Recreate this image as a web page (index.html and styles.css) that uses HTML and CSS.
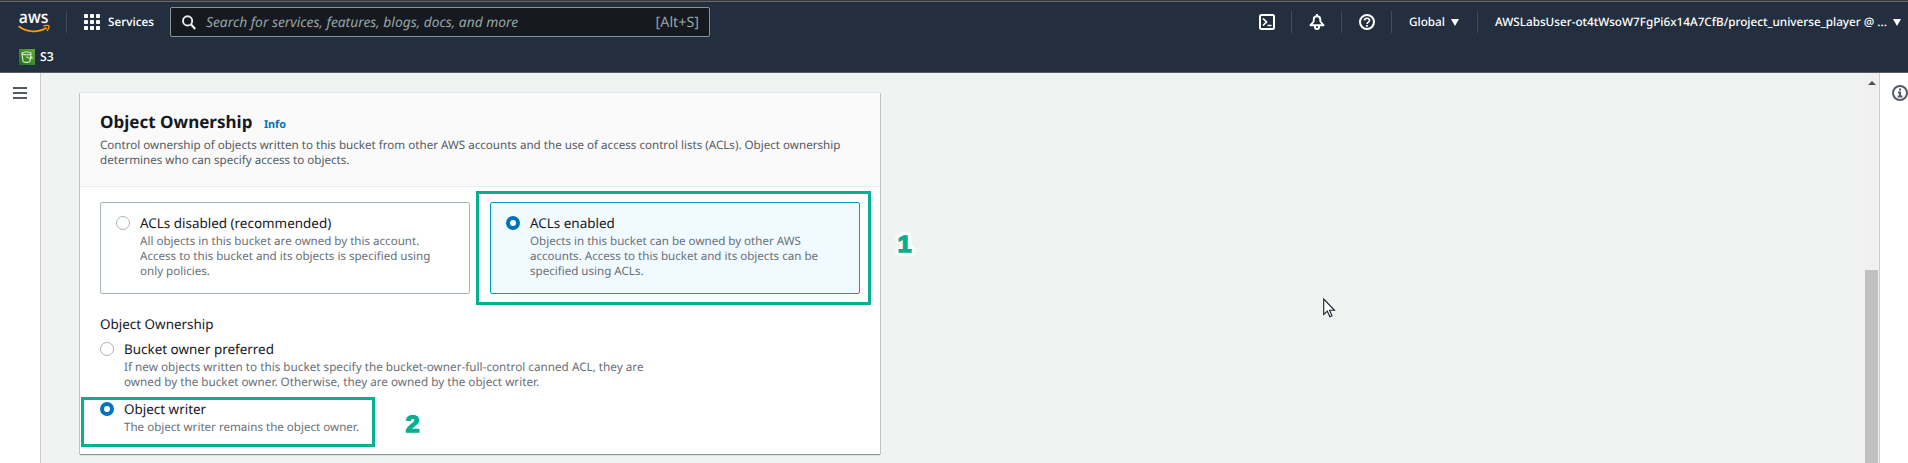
FILE: index.html
```
<!DOCTYPE html>
<html lang="en">
<head>
<meta charset="utf-8">
<title>Create S3 bucket</title>
<link rel="stylesheet" href="styles.css">
</head>
<body>
<header class="nav">
  <div class="nav-row">
    <svg class="logo" width="32" height="20" viewBox="0 0 32 20">
      <text class="logo-text" x="0.8" y="10" textLength="29.5" lengthAdjust="spacingAndGlyphs">aws</text>
      <path d="M.6 13.2c8.6 6.500 19.800 6.600 28 1.500" fill="none" stroke="#f90" stroke-width="1.800"/>
      <path d="M25.300 13.100c2-1 5.200-1 5.600-.4.400.8-.4 3.600-2 5" fill="none" stroke="#f90" stroke-width="1.300"/>
    </svg>
    <span class="divider after-logo"></span>
    <svg class="grid-icon" width="16" height="16" viewBox="0 0 16 16" fill="#fff">
      <rect width="4" height="4" rx=".8"/><rect x="6" width="4" height="4" rx=".8"/><rect x="12" width="4" height="4" rx=".8"/>
      <rect y="6" width="4" height="4" rx=".8"/><rect x="6" y="6" width="4" height="4" rx=".8"/><rect x="12" y="6" width="4" height="4" rx=".8"/>
      <rect y="12" width="4" height="4" rx=".8"/><rect x="6" y="12" width="4" height="4" rx=".8"/><rect x="12" y="12" width="4" height="4" rx=".8"/>
    </svg>
    <span class="services">Services</span>
    <div class="search">
      <svg width="14" height="15" viewBox="0 0 14 15" fill="none" stroke="#eaeded" stroke-width="1.900"><circle cx="5.600" cy="5.900" r="4.600"/><path d="M8.900 9.300l4.300 4.600" stroke-width="2.200"/></svg>
      <span class="placeholder">Search for services, features, blogs, docs, and more</span>
      <span class="shortcut">[Alt+S]</span>
    </div>
    <div class="nav-tools">
      <svg class="tool" width="16" height="16" viewBox="0 0 16 16" fill="none" stroke="#fff" stroke-width="2"><rect x="1" y="1" width="14" height="14" rx="1.500"/><path d="M4 4.500L7.500 8 4 11.500M8.500 11.500h4" stroke-width="1.700"/></svg>
      <span class="divider"></span>
      <svg class="tool" width="16" height="16" viewBox="0 0 16 16" fill="none" stroke="#fff" stroke-width="1.900" stroke-linejoin="round"><path d="M1.500 11.200h13L11.300 7.500V5.600C11.300 3.500 9.800 2.200 8 2.200S4.700 3.500 4.700 5.600v1.900z"/><path d="M8 0v2"/><path d="M5.900 12v.9a2.100 2.100 0 0 0 4.200 0V12"/></svg>
      <span class="divider"></span>
      <svg class="tool" width="16" height="16" viewBox="0 0 16 16" fill="none" stroke="#fff" stroke-width="2"><circle cx="8" cy="8" r="7"/><path d="M5.500 6.600C5.500 5 6.500 4.200 8 4.200s2.500.9 2.500 2.200C10.500 8.200 8 8 8 10" stroke-width="1.600"/><path d="M8 11v1.800" stroke-width="1.800"/></svg>
      <span class="divider"></span>
      <span class="region">Global</span>
      <svg class="caret" width="8" height="7" viewBox="0 0 8 7"><path d="M0 0h8L4 7z" fill="#fff"/></svg>
      <span class="divider"></span>
      <span class="account">AWSLabsUser-ot4tWsoW7FgPi6x14A7CfB/project_universe_player @ ...</span>
      <svg class="caret" width="8" height="7" viewBox="0 0 8 7"><path d="M0 0h8L4 7z" fill="#fff"/></svg>
    </div>
  </div>
  <div class="favorites">
    <svg width="16" height="16" viewBox="0 0 16 16"><defs><linearGradient id="s3" x1="0" y1="1" x2="1" y2="0"><stop stop-color="#1f6c1b"/><stop offset="1" stop-color="#62ab36"/></linearGradient></defs><rect width="16" height="16" fill="url(#s3)"/><g fill="none" stroke="#d9ecd2" stroke-width="1.100"><ellipse cx="7.500" cy="4.400" rx="4.500" ry="1.400"/><path d="M3 4.600l1 7.700c1.500 1.400 5.500 1.400 7 0L12 4.600M7.200 7.600c2 1.500 5.800 2.300 6 1.200.1-.5-.9-1.200-1.600-1.500"/></g></svg>
    <span class="fav-name">S3</span>
  </div>
</header>
<div class="page">
  <aside class="side">
    <span class="menu"></span>
  </aside>
  <main class="content">
    <section class="card">
      <div class="card-head">
        <h2>Object Ownership <a class="info">Info</a></h2>
        <p class="hint intro">Control ownership of objects written to this bucket from other AWS accounts and the use of access control lists (ACLs). Object ownership<br>determines who can specify access to objects.</p>
      </div>
      <div class="card-body">
        <div class="tiles">
          <div class="tile">
            <span class="radio"></span>
            <div>
              <div class="option">ACLs disabled (recommended)</div>
              <p class="hint">All objects in this bucket are owned by this account.<br>Access to this bucket and its objects is specified using<br>only policies.</p>
            </div>
          </div>
          <div class="tile selected">
            <span class="radio on"></span>
            <div>
              <div class="option">ACLs enabled</div>
              <p class="hint">Objects in this bucket can be owned by other AWS<br>accounts. Access to this bucket and its objects can be<br>specified using ACLs.</p>
            </div>
            <span class="callout callout-one"></span>
            <span class="number number-one">1</span>
          </div>
        </div>
        <div class="option group-label">Object Ownership</div>
        <div class="choice">
          <span class="radio"></span>
          <div>
            <div class="option">Bucket owner preferred</div>
            <p class="hint wide">If new objects written to this bucket specify the bucket-owner-full-control canned ACL, they are<br>owned by the bucket owner. Otherwise, they are owned by the object writer.</p>
          </div>
        </div>
        <div class="choice writer">
          <span class="radio on"></span>
          <div>
            <div class="option">Object writer</div>
            <p class="hint">The object writer remains the object owner.</p>
          </div>
          <span class="callout callout-two"></span>
          <span class="number number-two">2</span>
        </div>
      </div>
    </section>
  </main>
  <div class="scrollbar"><span class="up"></span><span class="thumb"></span></div>
  <aside class="help">
    <svg width="16" height="16" viewBox="0 0 16 16" fill="none" stroke="#545b64" stroke-width="2"><circle cx="8" cy="8" r="7"/><path d="M8 3.500v2M6 7.500h2v4M5.700 11.500h4.800"/></svg>
  </aside>
</div>
<svg class="cursor" width="13" height="20" viewBox="0 0 13 20"><path d="M.7 1v15.500l3.600-3.300 2.600 5.600 2.100-1-2.500-5.500h5z" fill="#fff" stroke="#1b2130" stroke-width="1.100"/></svg>
</body>
</html>
```
FILE: styles.css
```
* { box-sizing: border-box; }
body {
  margin: 0;
  height: 463px;
  overflow: hidden;
  display: flex;
  flex-direction: column;
  font-family: "Noto Sans", "Open Sans", sans-serif;
  color: #16191f;
  background: #f1f3f3;
  text-rendering: geometricPrecision;
  white-space: nowrap;
}
h2, p { margin: 0; }
svg { display: block; flex: none; }

.nav {
  height: 73px;
  flex: none;
  background: #232f3e;
  color: #fff;
  border-bottom: 1px solid #545b64;
  box-shadow: inset 0 1px #38393d, inset 0 2px #66676a;
}
.nav-row { display: flex; align-items: center; height: 44px; padding-left: 18px; }
.logo { overflow: visible; margin-top: 2px; }
.logo-text { font: 600 17px "Open Sans", sans-serif; fill: #fff; }
.divider { width: 1px; height: 22px; background: #414d5c; flex: none; }
.after-logo { margin: 0 17px 0 16px; }
.services { width: 62px; flex: none; margin-left: 8px; font: 600 11.7px/16px "Open Sans", sans-serif; }
.search {
  width: 540px;
  flex: none;
  height: 30px;
  display: flex;
  align-items: center;
  padding: 0 10px 0 11px;
  background: #16191f;
  border: 1px solid #879596;
  border-radius: 2px;
  color: #95a5a6;
}
.placeholder { margin-left: 10px; font-size: 13.81px; font-style: italic; }
.shortcut { margin-left: auto; font-size: 14.3px; }
.nav-tools { display: flex; flex: none; align-items: center; margin-left: 549px; font-size: 11.73px; font-weight: 500; }
.nav-tools .divider { margin-right: 17px; }
.tool { margin-right: 16px; }
.region { width: 42px; }
.account { width: 398px; }
.caret { margin-right: 18px; }
.favorites { display: flex; align-items: center; gap: 5px; height: 26px; padding-left: 19px; }
.fav-name { font: 600 12.3px/16px "Open Sans", sans-serif; }

.page { display: flex; flex: 1; min-height: 0; }
.side { width: 41px; flex: none; background: #fff; border-right: 1px solid #ccc; padding: 14px 0 0 13px; }
.menu { display: block; width: 14px; height: 12px; border: solid #545b64; border-width: 2px 0; background: linear-gradient(#545b64, #545b64) 0 3px / 14px 2px no-repeat; }
.content { flex: 1; padding: 20px 0 0 39px; }
.card {
  width: 800px;
  height: 361px;
  background: #fff;
  box-shadow: 0 1px 1px #879596, -1px 0 #c9cece, 1px 0 #c9cece, 0 -1px #e2e8e8;
}
.card-head { height: 94px; padding: 18px 20px 0; background: #fafafa; border-bottom: 1px solid #eaeded; }
h2 { font-size: 17.04px; line-height: 22px; font-weight: 700; margin-bottom: 2px; }
.info { margin-left: 7px; font-size: 10.8px; color: #0073bb; }
.hint { font-size: 11.58px; line-height: 15px; color: #687078; margin-top: 2px; }
.intro { font-size: 11.61px; color: #545b64; margin-top: 0; }
.wide { font-size: 11.72px; }
.card-body { padding: 15px 20px 0; }
.tiles { display: grid; grid-template-columns: 370px 370px; gap: 20px; }
.tile {
  position: relative;
  height: 92px;
  display: flex;
  gap: 10px;
  padding: 11px 15px;
  border: 1px solid #aab7b8;
  border-radius: 2px;
}
.selected { border-color: #00a1c9; background: #f1faff; }
.option { font-size: 13.45px; line-height: 18px; }
.radio { width: 14px; height: 14px; margin-top: 2px; flex: none; border: 1px solid #aab7b8; border-radius: 50%; background: #fff; }
.on { border: 4px solid #0073bb; }
.group-label { margin: 21px 0 7px; }
.choice { position: relative; display: flex; gap: 10px; }
.writer { margin-top: 10px; }

.callout { position: absolute; border: 3px solid #04b091; }
.callout-one { left: -15px; top: -12px; width: 395px; height: 114px; }
.callout-two { left: -19px; top: -3px; width: 294px; height: 50px; }
.number {
  position: absolute;
  font: bold 23.5px/24px "Liberation Sans", Arial, sans-serif;
  color: #04b091;
  transform: scaleX(1.080);
  -webkit-text-stroke: 1.300px #04b091;
}
.number-one {
  left: 407px;
  top: 29px;
  text-shadow: 4px 0 #fff, -4px 0 #fff, 0 4px #fff, 0 -4px #fff, 3px 3px #fff, -3px 3px #fff, 3px -3px #fff, -3px -3px #fff;
}
.number-two { left: 306px; top: 12px; }

.scrollbar { width: 15px; flex: none; display: flex; flex-direction: column; align-items: center; background: #f0f0f0; padding-top: 8px; }
.up { border: solid transparent; border-width: 0 4px 4px; border-bottom-color: #505050; }
.thumb { width: 13px; flex: 1; margin-top: 185px; background: #c1c1c1; }
.help { width: 29px; flex: none; background: #fff; border-left: 1px solid #ccc; padding: 12px 0 0 12px; }
.cursor { position: absolute; left: 1323px; top: 298px; }
```
